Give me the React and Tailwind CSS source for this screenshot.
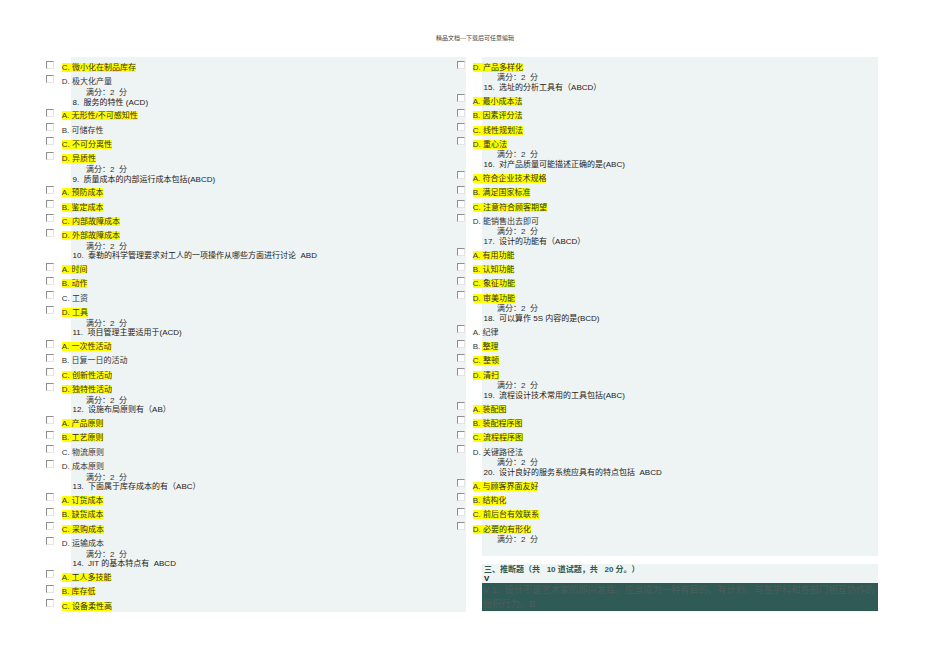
import React from "react";

const FONT = { fontFamily: '"Liberation Sans", "Noto Sans CJK SC", sans-serif' };

// option: [label, text, highlight]  highlight: true = whole, "text" = only text part
const LEFT = [
  { t: "o", l: "C", x: "微小化在制品库存", h: true },
  { t: "o", l: "D", x: "极大化产量" },
  { t: "s" },
  { t: "q", x: "8.  服务的特性 (ACD)" },
  { t: "o", l: "A", x: "无形性/不可感知性", h: true },
  { t: "o", l: "B", x: "可储存性" },
  { t: "o", l: "C", x: "不可分离性", h: true },
  { t: "o", l: "D", x: "异质性", h: true },
  { t: "s" },
  { t: "q", x: "9.  质量成本的内部运行成本包括(ABCD)" },
  { t: "o", l: "A", x: "预防成本", h: true },
  { t: "o", l: "B", x: "鉴定成本", h: true },
  { t: "o", l: "C", x: "内部故障成本", h: true },
  { t: "o", l: "D", x: "外部故障成本", h: true },
  { t: "s" },
  { t: "q", x: "10.  泰勒的科学管理要求对工人的一项操作从哪些方面进行讨论  ABD" },
  { t: "o", l: "A", x: "时间", h: true },
  { t: "o", l: "B", x: "动作", h: true },
  { t: "o", l: "C", x: "工资" },
  { t: "o", l: "D", x: "工具", h: true },
  { t: "s" },
  { t: "q", x: "11.  项目管理主要适用于(ACD)" },
  { t: "o", l: "A", x: "一次性活动", h: true },
  { t: "o", l: "B", x: "日复一日的活动" },
  { t: "o", l: "C", x: "创新性活动", h: true },
  { t: "o", l: "D", x: "独特性活动", h: true },
  { t: "s" },
  { t: "q", x: "12.  设施布局原则有（AB）" },
  { t: "o", l: "A", x: "产品原则", h: true },
  { t: "o", l: "B", x: "工艺原则", h: true },
  { t: "o", l: "C", x: "物流原则" },
  { t: "o", l: "D", x: "成本原则" },
  { t: "s" },
  { t: "q", x: "13.  下面属于库存成本的有（ABC）" },
  { t: "o", l: "A", x: "订货成本", h: true },
  { t: "o", l: "B", x: "缺货成本", h: true },
  { t: "o", l: "C", x: "采购成本", h: true },
  { t: "o", l: "D", x: "运输成本" },
  { t: "s" },
  { t: "q", x: "14.  JIT 的基本特点有  ABCD" },
  { t: "o", l: "A", x: "工人多技能", h: true },
  { t: "o", l: "B", x: "库存低", h: true },
  { t: "o", l: "C", x: "设备柔性高", h: true },
];

const RIGHT = [
  { t: "o", l: "D", x: "产品多样化", h: true },
  { t: "s" },
  { t: "q", x: "15.  选址的分析工具有（ABCD）" },
  { t: "o", l: "A", x: "最小成本法", h: true },
  { t: "o", l: "B", x: "因素评分法", h: true },
  { t: "o", l: "C", x: "线性规划法", h: true },
  { t: "o", l: "D", x: "重心法", h: true },
  { t: "s" },
  { t: "q", x: "16.  对产品质量可能描述正确的是(ABC)" },
  { t: "o", l: "A", x: "符合企业技术规格", h: true },
  { t: "o", l: "B", x: "满足国家标准", h: true },
  { t: "o", l: "C", x: "注意符合顾客期望", h: true },
  { t: "o", l: "D", x: "能销售出去即可" },
  { t: "s" },
  { t: "q", x: "17.  设计的功能有（ABCD）" },
  { t: "o", l: "A", x: "有用功能", h: true },
  { t: "o", l: "B", x: "认知功能", h: true },
  { t: "o", l: "C", x: "象征功能", h: true },
  { t: "o", l: "D", x: "审美功能", h: true },
  { t: "s" },
  { t: "q", x: "18.  可以算作 5S 内容的是(BCD)" },
  { t: "o", l: "A", x: "纪律" },
  { t: "o", l: "B", x: "整理", h: "text" },
  { t: "o", l: "C", x: "整顿", h: true },
  { t: "o", l: "D", x: "清扫", h: true },
  { t: "s" },
  { t: "q", x: "19.  流程设计技术常用的工具包括(ABC)" },
  { t: "o", l: "A", x: "装配图", h: true },
  { t: "o", l: "B", x: "装配程序图", h: true },
  { t: "o", l: "C", x: "流程程序图", h: true },
  { t: "o", l: "D", x: "关键路径法" },
  { t: "s" },
  { t: "q", x: "20.  设计良好的服务系统应具有的特点包括  ABCD" },
  { t: "o", l: "A", x: "与顾客界面友好", h: true },
  { t: "o", l: "B", x: "结构化", h: true },
  { t: "o", l: "C", x: "前后台有效联系", h: true },
  { t: "o", l: "D", x: "必要的有形化", h: true },
  { t: "s" },
];

function Checkbox() {
  return (
    <div className="w-[8px] h-[8px] bg-white border-t border-l border-[#8f8f8f] border-r border-b border-r-[#e4e4e4] border-b-[#e4e4e4]" />
  );
}

function Row({ item }) {
  if (item.t === "s") {
    return (
      <div className="h-[9.8px] pl-[15px] text-[8px] leading-[9.8px] text-[#333] whitespace-pre">
        满分：2  分
      </div>
    );
  }
  if (item.t === "q") {
    return (
      <div className="h-[9.6px] pl-[1.5px] text-[8px] leading-[9.6px] text-[#222] whitespace-pre">
        {item.x}
      </div>
    );
  }
  return (
    <div className="flex h-[14.4px] -ml-[25px]">
      <div className="w-[15.7px] shrink-0 pt-[1.5px]">
        <Checkbox />
      </div>
      <div className="pt-[3px] text-[8px] leading-[11px] text-[#333] whitespace-nowrap">
        {item.h === true ? (
          <span className="bg-[#ffff00]">{item.l}. {item.x}</span>
        ) : item.h === "text" ? (
          <>
            {item.l}. <span className="bg-[#ffff00]">{item.x}</span>
          </>
        ) : (
          <span>{item.l}. {item.x}</span>
        )}
      </div>
    </div>
  );
}

export default function App() {
  return (
    <div className="w-[950px] min-h-[672px] bg-white" style={FONT}>
      <div className="h-[57px] pt-[34px] text-center text-[6px] leading-[8px] text-[#444]">
        精品文档---下载后可任意编辑
      </div>

      <div className="flex items-start pl-[46px]">
        {/* left column */}
        <div className="w-[420px] pl-[25px]">
          <div className="bg-[#eef3f3] pt-[2px]">
            {LEFT.map((it, i) => (
              <Row key={i} item={it} />
            ))}
          </div>
        </div>

        {/* right column */}
        <div className="relative z-10 -ml-[9px] w-[421px] pl-[25px]">
          <div className="bg-[#eef3f3] pt-[2px] pb-[11px]">
            {RIGHT.map((it, i) => (
              <Row key={i} item={it} />
            ))}
          </div>

          <div className="mt-[8px] bg-[#eef3f3] pt-[1.5px] pb-[1px]">
            <div className="pl-[2px] h-[10px] text-[8px] leading-[10px] font-bold text-[#2d5a4f] whitespace-pre">
              三、推断题（共   10 道试题，共   20 分。）
            </div>
            <div className="pl-[2px] h-[7.5px] text-[8px] leading-[7.5px] font-bold text-[#111]">V</div>
            <div className="bg-[#2f5a55] pl-[1px] text-[9.25px] leading-[14px] text-[#4e5e5b] whitespace-pre">
              V 1.  设计不是艺术家的即兴发挥，应当成为一种有目的、有计划、与各学科和各部门相互协作的
              <br />
              组织行为。B
            </div>
          </div>
        </div>
      </div>
    </div>
  );
}
